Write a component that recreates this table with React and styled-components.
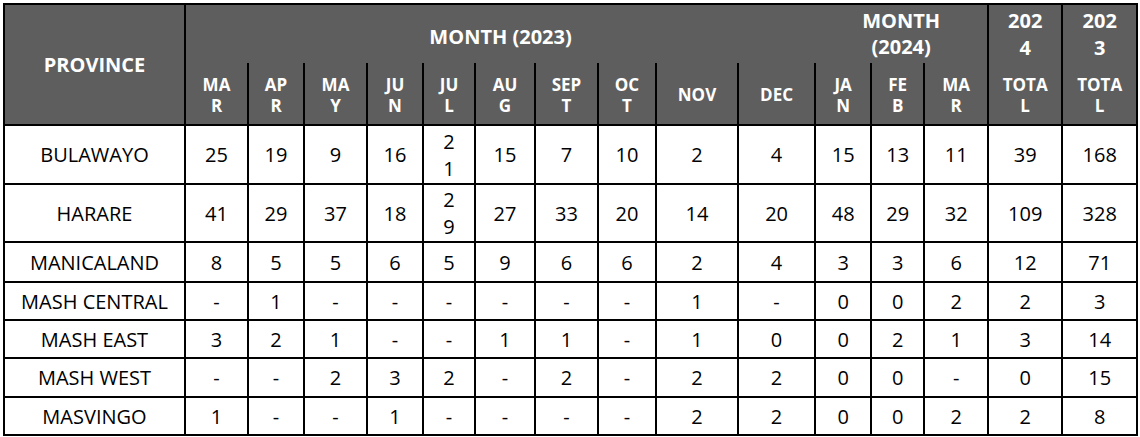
import React from "react";
import styled, { createGlobalStyle } from "styled-components";

const Global = createGlobalStyle`
  html, body { margin: 0; padding: 0; background: #fff; }
  body { font-family: "Open Sans", "Noto Sans", sans-serif; }
`;

const Wrap = styled.div`
  padding: 3px 0 0 3px;
`;

const Table = styled.table`
  border-collapse: collapse;
  table-layout: fixed;
  width: 1135px;
  border: 2px solid #000;
`;

const HeadRow = styled.tr`
  height: ${(p) => p.$h}px;
`;

const Th = styled.th`
  background: #5e5e5e;
  color: #fff;
  font-weight: 700;
  font-size: ${(p) => p.$size || 17}px;
  line-height: ${(p) => p.$lh || 21}px;
  text-align: center;
  vertical-align: middle;
  padding: 0;
  padding-top: ${(p) => p.$pad || 0}px;
  border: 2px solid #000;
  ${(p) => (p.$openBottom ? "border-bottom: none;" : "")}
  ${(p) => (p.$openTop ? "border-top: none;" : "")}
  ${(p) => (p.$openLeft ? "border-left: none;" : "")}
  ${(p) => (p.$openRight ? "border-right: none;" : "")}
`;

const BodyRow = styled.tr`
  height: ${(p) => p.$h}px;
`;

const Td = styled.td`
  border: 2px solid #000;
  padding: 0;
  text-align: center;
  vertical-align: middle;
  font-size: 20px;
  line-height: 27px;
  color: #000;
  background: #fff;
`;

const cols = [181, 63, 56, 63, 56, 52, 60, 63, 58, 82, 77, 56, 53, 64, 74, 75];

const months = [
  ["MA", "R"],
  ["AP", "R"],
  ["MA", "Y"],
  ["JU", "N"],
  ["JU", "L"],
  ["AU", "G"],
  ["SEP", "T"],
  ["OC", "T"],
  ["NOV"],
  ["DEC"],
  ["JA", "N"],
  ["FE", "B"],
  ["MA", "R"],
];

const rows = [
  ["BULAWAYO", 59, ["25", "19", "9", "16", "2\n1", "15", "7", "10", "2", "4", "15", "13", "11", "39", "168"]],
  ["HARARE", 58, ["41", "29", "37", "18", "2\n9", "27", "33", "20", "14", "20", "48", "29", "32", "109", "328"]],
  ["MANICALAND", 40, ["8", "5", "5", "6", "5", "9", "6", "6", "2", "4", "3", "3", "6", "12", "71"]],
  ["MASH CENTRAL", 38, ["-", "1", "-", "-", "-", "-", "-", "-", "1", "-", "0", "0", "2", "2", "3"]],
  ["MASH EAST", 38, ["3", "2", "1", "-", "-", "1", "1", "-", "1", "0", "0", "2", "1", "3", "14"]],
  ["MASH WEST", 39, ["-", "-", "2", "3", "2", "-", "2", "-", "2", "2", "0", "0", "-", "0", "15"]],
  ["MASVINGO", 38, ["1", "-", "-", "1", "-", "-", "-", "-", "2", "2", "0", "0", "2", "2", "8"]],
];

const Lines = ({ parts }) =>
  parts.map((t, i) => (
    <React.Fragment key={i}>
      {i > 0 && <br />}
      {t}
    </React.Fragment>
  ));

export default function App() {
  return (
    <>
      <Global />
      <Wrap>
        <Table>
          <colgroup>
            {cols.map((w, i) => (
              <col key={i} style={{ width: w }} />
            ))}
          </colgroup>
          <thead>
            <HeadRow $h={59}>
              <Th rowSpan={2} $size={20} $lh={26}>PROVINCE</Th>
              <Th colSpan={10} $size={20} $lh={26} $openBottom $openRight $pad={6}>
                MONTH (2023)
              </Th>
              <Th colSpan={3} $size={20} $lh={26} $openBottom $openLeft>
                <Lines parts={["MONTH", "(2024)"]} />
              </Th>
              <Th $size={20} $lh={27} $openBottom>
                <Lines parts={["202", "4"]} />
              </Th>
              <Th $size={20} $lh={27} $openBottom>
                <Lines parts={["202", "3"]} />
              </Th>
            </HeadRow>
            <HeadRow $h={62}>
              {months.map((m, i) => (
                <Th key={i} $openTop $pad={2}>
                  <Lines parts={m} />
                </Th>
              ))}
              <Th $openTop $pad={2}>
                <Lines parts={["TOTA", "L"]} />
              </Th>
              <Th $openTop $pad={2}>
                <Lines parts={["TOTA", "L"]} />
              </Th>
            </HeadRow>
          </thead>
          <tbody>
            {rows.map(([name, h, vals]) => (
              <BodyRow key={name} $h={h}>
                <Td>{name}</Td>
                {vals.map((v, i) => (
                  <Td key={i}>
                    <Lines parts={v.split("\n")} />
                  </Td>
                ))}
              </BodyRow>
            ))}
          </tbody>
        </Table>
      </Wrap>
    </>
  );
}
